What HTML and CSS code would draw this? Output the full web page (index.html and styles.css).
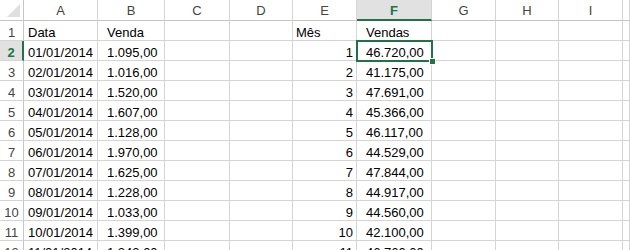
FILE: index.html
```html
<!DOCTYPE html>
<html>
<head>
<meta charset="utf-8">
<link rel="stylesheet" href="styles.css">
</head>
<body>
<div class="sheet">
  <div class="row head">
    <div class="corner"><span class="tri"></span></div>
    <div class="ch">A</div><div class="ch">B</div><div class="ch">C</div><div class="ch">D</div><div class="ch">E</div><div class="ch sel">F</div><div class="ch">G</div><div class="ch">H</div><div class="ch">I</div><div class="ch"></div>
  </div>
  <div class="row"><div class="rh">1</div><div class="c a">Data</div><div class="c b">Venda</div><div class="c"></div><div class="c"></div><div class="c e-txt">Mês</div><div class="c f">Vendas</div><div class="c"></div><div class="c"></div><div class="c"></div><div class="c"></div></div>
  <div class="row"><div class="rh sel">2</div><div class="c a">01/01/2014</div><div class="c b">1.095,00</div><div class="c"></div><div class="c"></div><div class="c e">1</div><div class="c f">46.720,00</div><div class="c"></div><div class="c"></div><div class="c"></div><div class="c"></div></div>
  <div class="row"><div class="rh">3</div><div class="c a">02/01/2014</div><div class="c b">1.016,00</div><div class="c"></div><div class="c"></div><div class="c e">2</div><div class="c f">41.175,00</div><div class="c"></div><div class="c"></div><div class="c"></div><div class="c"></div></div>
  <div class="row"><div class="rh">4</div><div class="c a">03/01/2014</div><div class="c b">1.520,00</div><div class="c"></div><div class="c"></div><div class="c e">3</div><div class="c f">47.691,00</div><div class="c"></div><div class="c"></div><div class="c"></div><div class="c"></div></div>
  <div class="row"><div class="rh">5</div><div class="c a">04/01/2014</div><div class="c b">1.607,00</div><div class="c"></div><div class="c"></div><div class="c e">4</div><div class="c f">45.366,00</div><div class="c"></div><div class="c"></div><div class="c"></div><div class="c"></div></div>
  <div class="row"><div class="rh">6</div><div class="c a">05/01/2014</div><div class="c b">1.128,00</div><div class="c"></div><div class="c"></div><div class="c e">5</div><div class="c f">46.117,00</div><div class="c"></div><div class="c"></div><div class="c"></div><div class="c"></div></div>
  <div class="row"><div class="rh">7</div><div class="c a">06/01/2014</div><div class="c b">1.970,00</div><div class="c"></div><div class="c"></div><div class="c e">6</div><div class="c f">44.529,00</div><div class="c"></div><div class="c"></div><div class="c"></div><div class="c"></div></div>
  <div class="row"><div class="rh">8</div><div class="c a">07/01/2014</div><div class="c b">1.625,00</div><div class="c"></div><div class="c"></div><div class="c e">7</div><div class="c f">47.844,00</div><div class="c"></div><div class="c"></div><div class="c"></div><div class="c"></div></div>
  <div class="row"><div class="rh">9</div><div class="c a">08/01/2014</div><div class="c b">1.228,00</div><div class="c"></div><div class="c"></div><div class="c e">8</div><div class="c f">44.917,00</div><div class="c"></div><div class="c"></div><div class="c"></div><div class="c"></div></div>
  <div class="row"><div class="rh">10</div><div class="c a">09/01/2014</div><div class="c b">1.033,00</div><div class="c"></div><div class="c"></div><div class="c e">9</div><div class="c f">44.560,00</div><div class="c"></div><div class="c"></div><div class="c"></div><div class="c"></div></div>
  <div class="row"><div class="rh">11</div><div class="c a">10/01/2014</div><div class="c b">1.399,00</div><div class="c"></div><div class="c"></div><div class="c e">10</div><div class="c f">42.100,00</div><div class="c"></div><div class="c"></div><div class="c"></div><div class="c"></div></div>
  <div class="row"><div class="rh">12</div><div class="c a">11/01/2014</div><div class="c b">1.243,00</div><div class="c"></div><div class="c"></div><div class="c e">11</div><div class="c f">46.760,00</div><div class="c"></div><div class="c"></div><div class="c"></div><div class="c"></div></div>
  <div class="selection"><span class="handle"></span></div>
</div>
</body>
</html>
```

FILE: styles.css
```css
html, body {
  margin: 0;
  padding: 0;
  background: #fff;
  overflow: hidden;
}
.sheet {
  position: relative;
  width: 630px;
  height: 250px;
  overflow: hidden;
  font-family: "Liberation Sans", Arial, sans-serif;
  font-size: 13px;
  color: #000;
}
.row {
  display: grid;
  grid-template-columns: 24px 74px 67px 65px 63px 64px 75px 64px 63px 64px 7px;
  height: 20px;
}
.row.head {
  height: 21px;
}
.row > div {
  box-sizing: border-box;
  white-space: nowrap;
  overflow: hidden;
  padding-top: 3px;
  line-height: 18px;
}
.c {
  border-right: 1px solid #d4d4d4;
  border-bottom: 1px solid #d4d4d4;
}
.rh {
  border-right: 1px solid #c6c6c6;
  border-bottom: 1px solid #d4d4d4;
  text-align: center;
  color: #444;
}
.rh.sel {
  background: #e1e1e1;
  color: #217346;
  font-weight: bold;
  border-right: 2px solid #217346;
}
.ch {
  border-right: 1px solid #d4d4d4;
  border-bottom: 1px solid #c6c6c6;
  text-align: center;
  color: #444;
  padding-top: 2px !important;
}
.ch.sel {
  background: #e1e1e1;
  color: #217346;
  font-weight: bold;
  border-bottom: 2px solid #217346;
}
.corner {
  position: relative;
  border-right: 1px solid #c6c6c6;
  border-bottom: 1px solid #c6c6c6;
}
.tri {
  position: absolute;
  right: 3px;
  bottom: 3px;
  width: 0;
  height: 0;
  border-left: 13px solid transparent;
  border-bottom: 13px solid #dfdfdf;
}
.a { padding-left: 4px; }
.b { padding-left: 9px; }
.e-txt { padding-left: 3px; }
.e { text-align: right; padding-right: 3px; }
.f { padding-left: 9px; }
.selection {
  position: absolute;
  left: 356px;
  top: 40px;
  width: 77px;
  height: 22px;
  box-sizing: border-box;
  border: 2px solid #217346;
}
.handle {
  position: absolute;
  right: -5px;
  bottom: -5px;
  width: 5px;
  height: 5px;
  background: #217346;
  border: 1px solid #fff;
}
```
